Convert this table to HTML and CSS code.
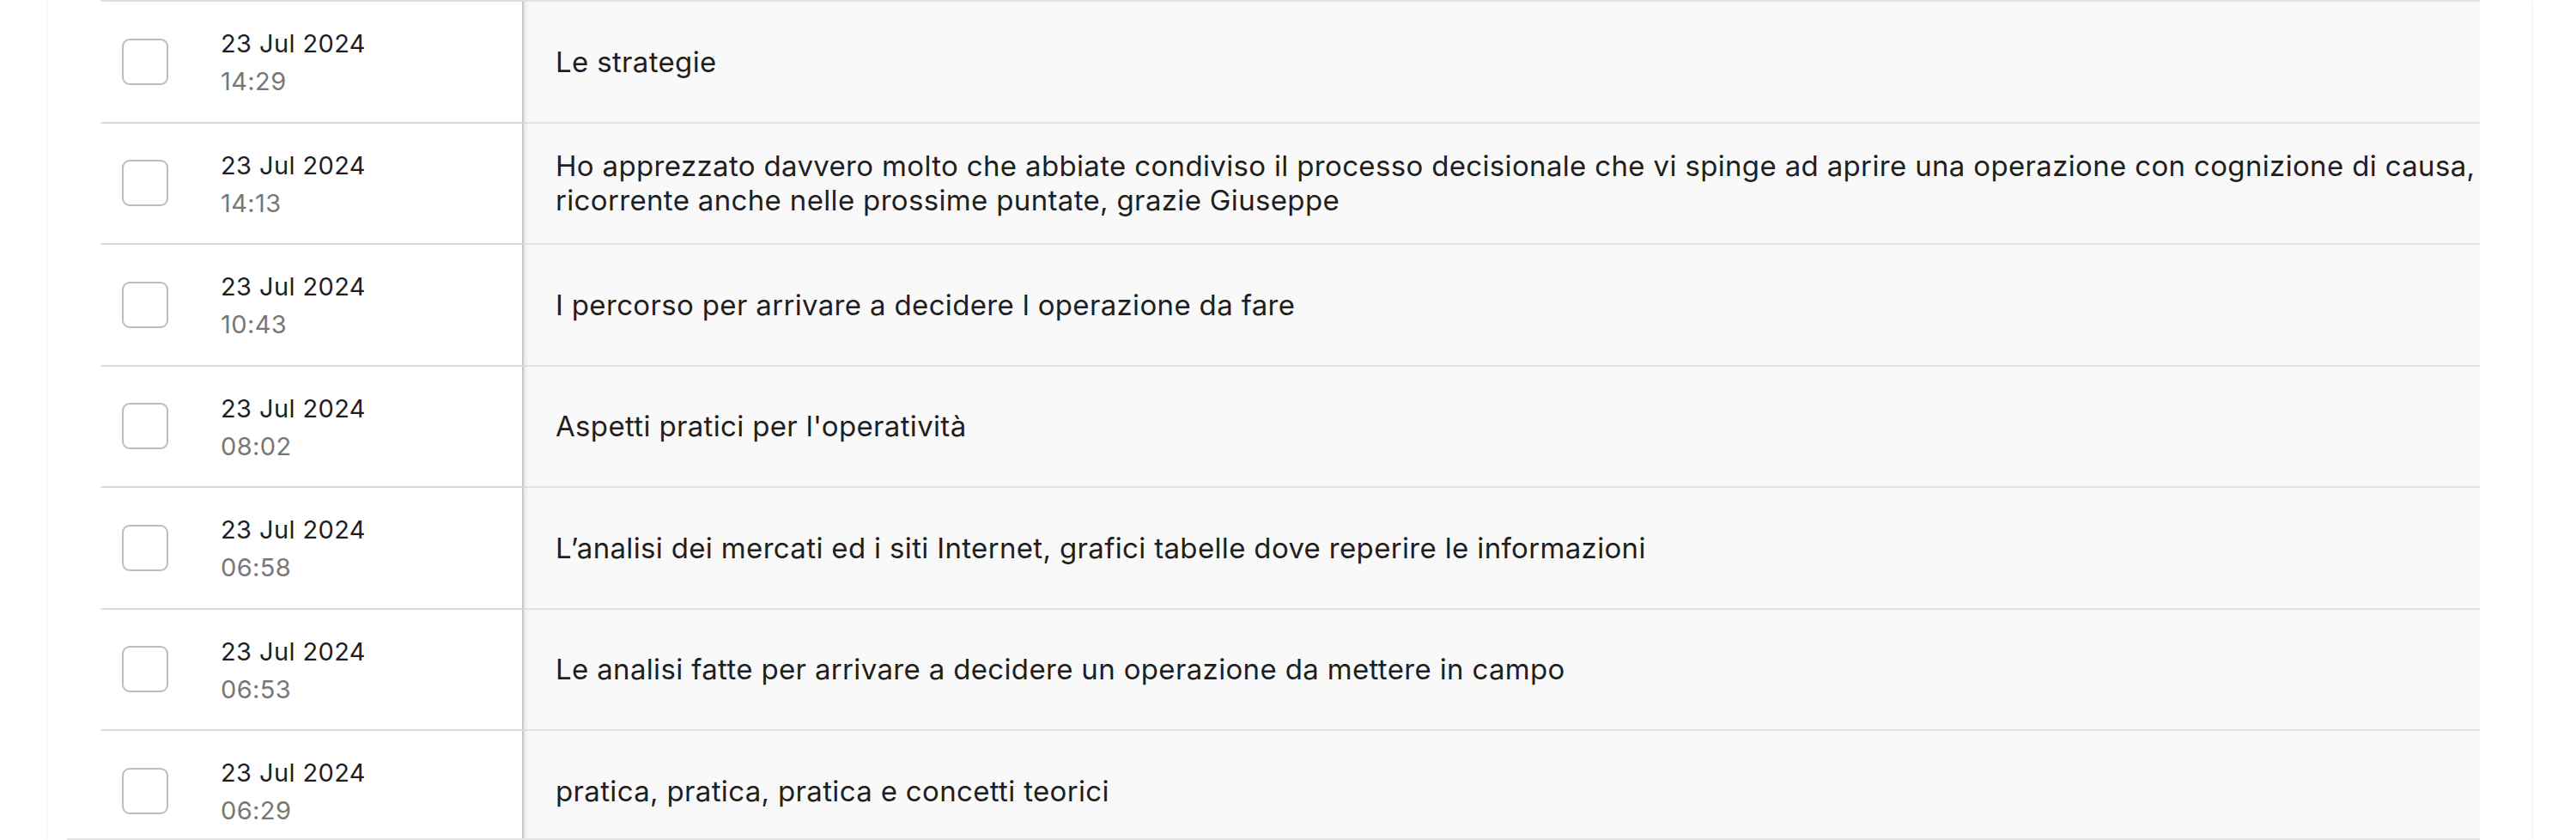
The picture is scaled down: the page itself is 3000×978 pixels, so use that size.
FILE: index.html
```html
<!DOCTYPE html>
<html lang="it">
<head>
<meta charset="utf-8">
<title>Commenti</title>
<link rel="stylesheet" href="styles.css">
</head>
<body>
<div class="page">
  <div class="card">
    <div class="scroller">
      <div class="rows">
        <div class="row">
          <div class="lead"><span class="check"></span><div class="when"><div class="date">23 Jul 2024</div><div class="time">14:29</div></div></div>
          <div class="msg">Le strategie</div>
        </div>
        <div class="row">
          <div class="lead"><span class="check"></span><div class="when"><div class="date">23 Jul 2024</div><div class="time">14:13</div></div></div>
          <div class="msg">Ho apprezzato davvero molto che abbiate condiviso il processo decisionale che vi spinge ad aprire una operazione con cognizione di causa,<br>ricorrente anche nelle prossime puntate, grazie Giuseppe</div>
        </div>
        <div class="row">
          <div class="lead"><span class="check"></span><div class="when"><div class="date">23 Jul 2024</div><div class="time">10:43</div></div></div>
          <div class="msg">I percorso per arrivare a decidere l operazione da fare</div>
        </div>
        <div class="row">
          <div class="lead"><span class="check"></span><div class="when"><div class="date">23 Jul 2024</div><div class="time">08:02</div></div></div>
          <div class="msg">Aspetti pratici per l'operatività</div>
        </div>
        <div class="row">
          <div class="lead"><span class="check"></span><div class="when"><div class="date">23 Jul 2024</div><div class="time">06:58</div></div></div>
          <div class="msg">L’analisi dei mercati ed i siti Internet, grafici tabelle dove reperire le informazioni</div>
        </div>
        <div class="row">
          <div class="lead"><span class="check"></span><div class="when"><div class="date">23 Jul 2024</div><div class="time">06:53</div></div></div>
          <div class="msg">Le analisi fatte per arrivare a decidere un operazione da mettere in campo</div>
        </div>
        <div class="row">
          <div class="lead"><span class="check"></span><div class="when"><div class="date">23 Jul 2024</div><div class="time">06:29</div></div></div>
          <div class="msg">pratica, pratica, pratica e concetti teorici</div>
        </div>
      </div>
    </div>
  </div>
</div>
</body>
</html>
```
FILE: styles.css
```css
html, body {
  margin: 0;
  padding: 0;
  background: #ffffff;
}
body {
  font-family: Inter, "Noto Sans", "Liberation Sans", sans-serif;
  color: #1f1f1f;
  overflow: hidden;
}
.page {
  padding: 0 52px 0 56px;
}
.card {
  background: #ffffff;
  box-shadow: 0 0 4px rgba(0, 0, 0, 0.07);
  height: 978px;
  padding: 0 60px 0 22px;
}
.scroller {
  height: 976px;
  overflow: hidden;
  border-bottom: 2px solid #e3e3e3;
}
.rows {
  margin-left: 39px;
  border-top: 2px solid #e3e3e3;
}
.row {
  display: grid;
  grid-template-columns: 493px 1fr;
  height: 141.5px;
  box-sizing: border-box;
  border-bottom: 2px solid #e3e3e3;
}
.lead {
  display: flex;
  align-items: center;
  gap: 61px;
  padding-left: 25px;
  background: #ffffff;
  border-right: 2px solid #c7c7c7;
  position: relative;
  z-index: 1;
  box-shadow: 3px 0 4px rgba(0, 0, 0, 0.07);
}
.check {
  width: 54px;
  height: 54px;
  box-sizing: border-box;
  border: 2px solid #bdbdbd;
  border-radius: 9px;
  background: #ffffff;
  flex: none;
}
.when {
  font-size: 29px;
  line-height: 44px;
  letter-spacing: 0.4px;
  padding-top: 3px;
}
.date {
  color: #1f1f1f;
}
.time {
  color: #777777;
}
.msg {
  background: #f9f9f9;
  display: flex;
  align-items: center;
  padding-left: 37px;
  font-size: 33px;
  line-height: 40px;
  letter-spacing: 0.34px;
  white-space: nowrap;
  overflow: hidden;
}
```
